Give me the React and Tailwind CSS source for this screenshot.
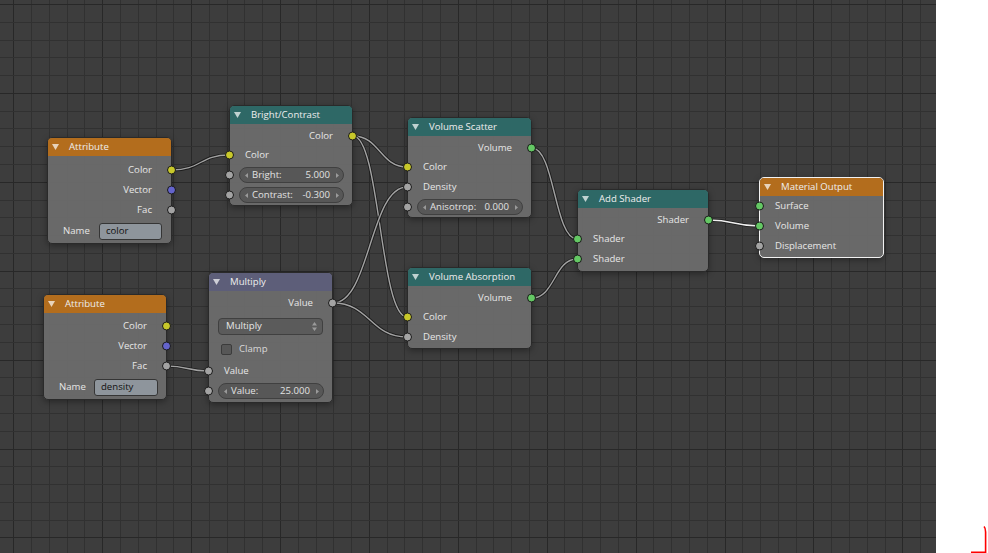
import React from 'react';

const SOCK = {
  yellow: 'bg-[#c8c82a]',
  purple: 'bg-[#6464cc]',
  grey: 'bg-[#a3a3a3]',
  green: 'bg-[#64c864]',
};

const GRID_X = Array.from({ length: 53 }, (_, k) => ({ v: Math.round(13.3 + 17.78 * k) + 0.5, major: k % 5 === 0 }));
const GRID_Y = Array.from({ length: 32 }, (_, k) => ({ v: Math.round(4 + 17.78 * k) + 0.5, major: k % 5 === 0 }));

const LINKS = [
  [172, 170, 229, 155],
  [353, 136, 407, 167],
  [353, 136, 407, 317],
  [333, 303, 407, 187],
  [333, 303, 407, 337],
  [167, 366, 208, 371],
  [532, 148, 577, 239],
  [532, 298, 577, 259],
  [709, 220, 759, 226, true],
];

const bezier = (x1, y1, x2, y2) => {
  const d = Math.abs(x2 - x1) * 0.5;
  return `M${x1} ${y1} C${x1 + d} ${y1} ${x2 - d} ${y2} ${x2} ${y2}`;
};

function Socket({ side, color }) {
  return (
    <span
      className={`absolute top-1/2 h-[9px] w-[9px] -translate-y-1/2 rounded-full border border-[#1a1a1a] ${
        side === 'in' ? 'left-[-5px]' : 'right-[-5px]'
      } ${SOCK[color]}`}
    />
  );
}

const Out = ({ label, color, h = 'h-5' }) => (
  <div className={`relative flex ${h} items-center justify-end pr-[19px]`}>
    {label}
    <Socket side="out" color={color} />
  </div>
);

const In = ({ label, color }) => (
  <div className="relative flex h-5 items-center pl-[15px]">
    {label}
    <Socket side="in" color={color} />
  </div>
);

const Arrow = ({ dir }) => (
  <svg width="3" height="5" viewBox="0 0 3 5" className="shrink-0">
    <path d={dir === 'l' ? 'M3 0V5L0 2.5Z' : 'M0 0V5L3 2.5Z'} fill="#9a9a9a" />
  </svg>
);

const NumField = ({ label, value }) => (
  <div className="relative flex h-5 items-center pl-[9px] pr-[8px]">
    <Socket side="in" color="grey" />
    <div className="flex h-4 flex-1 items-center rounded-full border border-[#404040] bg-[#575757] pl-[5px] pr-[4px] text-[#e2e2e2]">
      <Arrow dir="l" />
      <span className="ml-[4px]">{label}</span>
      <span className="ml-auto mr-[6px]">{value}</span>
      <Arrow dir="r" />
    </div>
  </div>
);

const NameRow = ({ value, fw, mr }) => (
  <div className="mt-[3px] flex h-[17px] items-center pl-[15px]">
    <span>Name</span>
    <div className={`ml-auto flex h-[17px] ${fw} ${mr} items-center rounded-[3px] border border-[#353535] bg-[#8e959c] pl-[6px] text-[#111]`}>
      {value}
    </div>
  </div>
);

function Node({ pos, title, head, active, body, children }) {
  return (
    <div
      className={`absolute ${pos} rounded-[5px] border ${
        active ? 'border-[#f2f2f2]' : 'border-[#2a2a2a]'
      } bg-[#6c6c6c]/95 shadow-[0_2px_6px_rgba(0,0,0,0.35)]`}
    >
      <div className={`flex h-[18px] items-center rounded-t-[4px] ${head} pl-[4px] text-[#eeeeee]`}>
        <svg width="7" height="6" viewBox="0 0 7 6">
          <path d="M0 0H7L3.5 6Z" fill="#ffffff" fillOpacity="0.7" />
        </svg>
        <span className="ml-[10px]">{title}</span>
      </div>
      <div className={body}>{children}</div>
    </div>
  );
}

export default function App() {
  return (
    <div className="flex h-[553px] w-[988px] overflow-hidden font-['Open_Sans','DejaVu_Sans',sans-serif] text-[9.6px] text-[#e6e6e6]">
      <div className="relative h-full w-[936px] bg-[#3d3d3d]">
        <svg className="absolute inset-0" width="936" height="553">
          {GRID_X.map((g) => (
            <line key={'x' + g.v} x1={g.v} y1="0" x2={g.v} y2="553" stroke={g.major ? '#282828' : '#313131'} strokeWidth="1" />
          ))}
          {GRID_Y.map((g) => (
            <line key={'y' + g.v} x1="0" y1={g.v} x2="936" y2={g.v} stroke={g.major ? '#282828' : '#313131'} strokeWidth="1" />
          ))}
          {LINKS.map(([x1, y1, x2, y2, hot], i) => (
            <g key={i} fill="none">
              <path d={bezier(x1, y1, x2, y2)} stroke="#161616" strokeOpacity="0.85" strokeWidth="3.2" />
              <path d={bezier(x1, y1, x2, y2)} stroke={hot ? '#f0f0f0' : '#a2a2a2'} strokeWidth="1.4" />
            </g>
          ))}
        </svg>

        <Node pos="left-[47px] top-[137px] w-[125px]" title="Attribute" head="bg-[#b36d1d]" body="pt-[4px] pb-[3px]">
          <Out label="Color" color="yellow" />
          <Out label="Vector" color="purple" />
          <Out label="Fac" color="grey" />
          <NameRow value="color" fw="w-[63px]" mr="mr-[9px]" />
        </Node>

        <Node pos="left-[43px] top-[294px] w-[124px]" title="Attribute" head="bg-[#b36d1d]" body="pt-[3px] pb-[3px]">
          <Out label="Color" color="yellow" />
          <Out label="Vector" color="purple" />
          <Out label="Fac" color="grey" />
          <NameRow value="density" fw="w-[64px]" mr="mr-[8px]" />
        </Node>

        <Node pos="left-[229px] top-[105px] w-[124px]" title="Bright/Contrast" head="bg-[#2e6866]" body="pt-[3px]">
          <Out label="Color" color="yellow" h="h-[18px]" />
          <In label="Color" color="yellow" />
          <NumField label="Bright:" value="5.000" />
          <NumField label="Contrast:" value="-0.300" />
        </Node>

        <Node pos="left-[208px] top-[272px] w-[125px]" title="Multiply" head="bg-[#5d5e79]" body="pt-[3px] pb-[1px]">
          <Out label="Value" color="grey" h="h-[18px]" />
          <div className="mx-[9px] mt-[6px] flex h-[17px] items-center rounded-[4px] border border-[#404040] bg-[#5b5b5b] pl-[7px] pr-[5px]">
            <span>Multiply</span>
            <svg width="5" height="9" viewBox="0 0 5 9" className="ml-auto">
              <path d="M0 3.5L2.5 0L5 3.5Z M0 5.5L2.5 9L5 5.5Z" fill="#9a9a9a" />
            </svg>
          </div>
          <div className="mt-[2px] flex h-[24px] items-center pl-[12px]">
            <span className="h-[11px] w-[11px] rounded-[2px] border border-[#3b3b3b] bg-[#575757]" />
            <span className="ml-[7px] text-[#d8d8d8]">Clamp</span>
          </div>
          <In label="Value" color="grey" />
          <NumField label="Value:" value="25.000" />
        </Node>

        <Node pos="left-[407px] top-[117px] w-[125px]" title="Volume Scatter" head="bg-[#2e6866]" body="pt-[3px]">
          <Out label="Volume" color="green" h="h-[18px]" />
          <In label="Color" color="yellow" />
          <In label="Density" color="grey" />
          <NumField label="Anisotrop:" value="0.000" />
        </Node>

        <Node pos="left-[407px] top-[267px] w-[125px]" title="Volume Absorption" head="bg-[#2e6866]" body="pt-[3px] pb-[1px]">
          <Out label="Volume" color="green" h="h-[18px]" />
          <In label="Color" color="yellow" />
          <In label="Density" color="grey" />
        </Node>

        <Node pos="left-[577px] top-[189px] w-[132px]" title="Add Shader" head="bg-[#2e6866]" body="pt-[3px] pb-[2px]">
          <Out label="Shader" color="green" h="h-[18px]" />
          <In label="Shader" color="green" />
          <In label="Shader" color="green" />
        </Node>

        <Node pos="left-[759px] top-[177px] w-[125px]" title="Material Output" head="bg-[#b36d1d]" active body="pb-[1px]">
          <In label="Surface" color="green" />
          <In label="Volume" color="green" />
          <In label="Displacement" color="grey" />
        </Node>
      </div>

      <div className="relative h-full flex-1 bg-white">
        <svg className="absolute inset-0" width="52" height="553">
          <path d="M48 526.5Q49.6 528 49.6 532V552.2H35" fill="none" stroke="#ff0000" strokeWidth="1.6" />
        </svg>
      </div>
    </div>
  );
}
